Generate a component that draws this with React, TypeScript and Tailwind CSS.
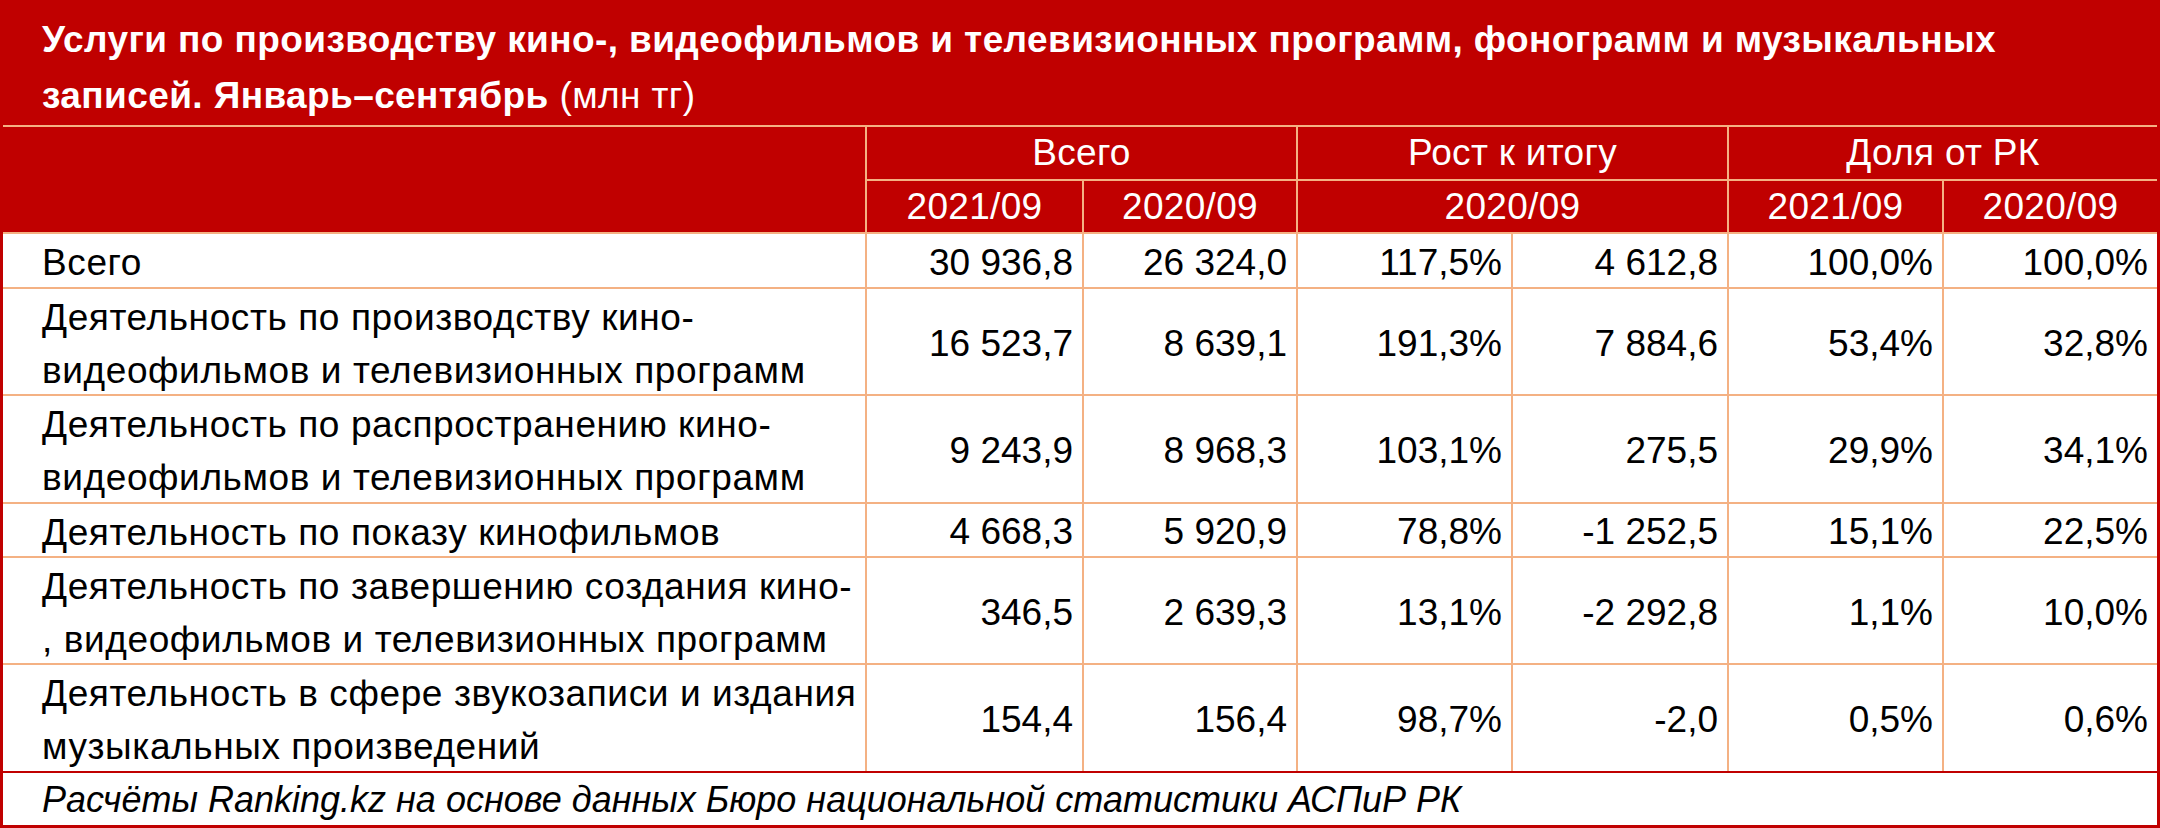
const font = "font-['Liberation_Sans',Arial,sans-serif]";

type Row = {
  label: string[];
  values: string[];
};

const rows: Row[] = [
  { label: ["Всего"], values: ["30 936,8", "26 324,0", "117,5%", "4 612,8", "100,0%", "100,0%"] },
  {
    label: ["Деятельность по производству кино-", "видеофильмов и телевизионных программ"],
    values: ["16 523,7", "8 639,1", "191,3%", "7 884,6", "53,4%", "32,8%"],
  },
  {
    label: ["Деятельность по распространению кино-", "видеофильмов и телевизионных программ"],
    values: ["9 243,9", "8 968,3", "103,1%", "275,5", "29,9%", "34,1%"],
  },
  { label: ["Деятельность по показу кинофильмов"], values: ["4 668,3", "5 920,9", "78,8%", "-1 252,5", "15,1%", "22,5%"] },
  {
    label: ["Деятельность по завершению создания кино-", ", видеофильмов и телевизионных программ"],
    values: ["346,5", "2 639,3", "13,1%", "-2 292,8", "1,1%", "10,0%"],
  },
  {
    label: ["Деятельность в сфере звукозаписи и издания", "музыкальных произведений"],
    values: ["154,4", "156,4", "98,7%", "-2,0", "0,5%", "0,6%"],
  },
];

const head = "bg-[#c00000] text-white flex items-center justify-center tracking-[0.3px]";

export default function App() {
  return (
    <div className={`w-[2160px] h-[828px] bg-[#c00000] px-[3px] ${font}`}>
      {/* Title */}
      <div className="h-[125px] pl-[39px] pt-[12px] text-white text-[37px] leading-[56px] font-bold tracking-[0.4px] whitespace-nowrap">
        Услуги по производству кино-, видеофильмов и телевизионных программ, фонограмм и музыкальных
        <br />
        записей. Январь–сентябрь <span className="font-normal">(млн тг)</span>
      </div>

      {/* Table */}
      <div className="grid grid-cols-[862px_215px_212px_213px_214px_213px_213px] grid-rows-[52px_51px_53px_105px_106px_52px_105px_106px] gap-[2px] bg-[#f4b183] border-t-2 border-[#f4b183] text-[37px]">
        <div className="row-span-2 bg-[#c00000]" />
        <div className={`col-span-2 ${head}`}>Всего</div>
        <div className={`col-span-2 ${head}`}>Рост к итогу</div>
        <div className={`col-span-2 ${head}`}>Доля от РК</div>

        <div className={head}>2021/09</div>
        <div className={head}>2020/09</div>
        <div className={`col-span-2 ${head}`}>2020/09</div>
        <div className={head}>2021/09</div>
        <div className={head}>2020/09</div>

        {rows.map((r) => (
          <>
            <div key={r.label[0]} className="bg-white text-black pl-[39px] flex flex-col justify-center leading-[53px] pt-[4px] tracking-[0.6px]">
              {r.label.map((l) => (
                <span key={l} className="whitespace-nowrap">{l}</span>
              ))}
            </div>
            {r.values.map((v, i) => (
              <div key={r.label[0] + i} className="bg-white text-black pr-[9px] pt-[4px] flex items-center justify-end">
                {v}
              </div>
            ))}
          </>
        ))}
      </div>

      {/* Source */}
      <div className="h-[54px] border-t-2 border-[#c00000] bg-white pl-[39px] flex items-center pt-[2px] text-[36px] italic text-black whitespace-nowrap">
        Расчёты Ranking.kz на основе данных Бюро национальной статистики АСПиР РК
      </div>
    </div>
  );
}
